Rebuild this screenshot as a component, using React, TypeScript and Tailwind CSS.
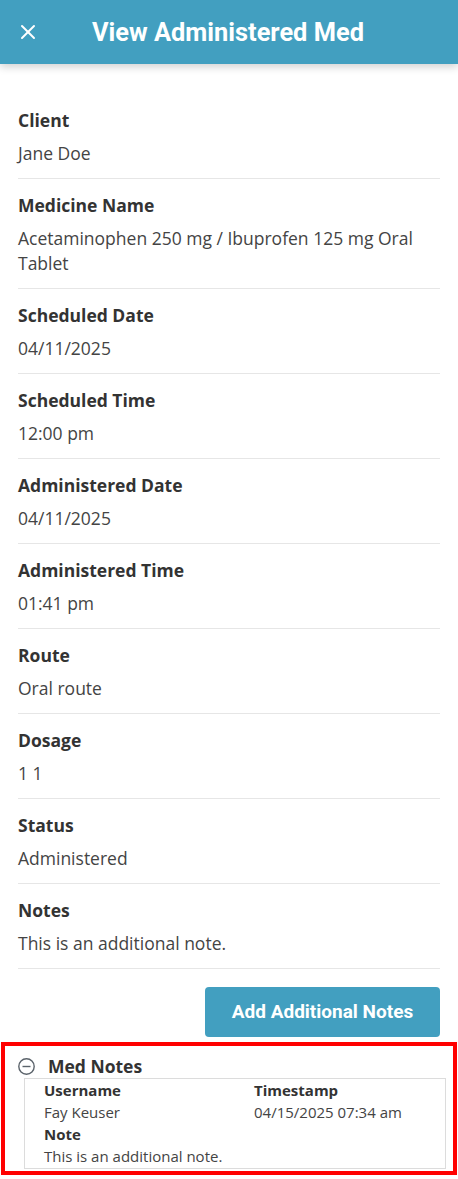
import { X } from 'lucide-react'

const fields = [
  { label: 'Client', value: 'Jane Doe' },
  { label: 'Medicine Name', value: 'Acetaminophen 250 mg / Ibuprofen 125 mg Oral Tablet' },
  { label: 'Scheduled Date', value: '04/11/2025' },
  { label: 'Scheduled Time', value: '12:00 pm' },
  { label: 'Administered Date', value: '04/11/2025' },
  { label: 'Administered Time', value: '01:41 pm' },
  { label: 'Route', value: 'Oral route' },
  { label: 'Dosage', value: '1 1' },
  { label: 'Status', value: 'Administered' },
  { label: 'Notes', value: 'This is an additional note.' },
]

function Field({ label, value }: { label: string; value: string }) {
  return (
    <div className="pt-[14px] pb-[12px] border-b border-[#e6e6e6]">
      <p className="text-[17.5px] leading-[25px] font-bold text-[#333333]">{label}</p>
      <p className="mt-[8px] text-[17.5px] leading-[25px] text-[#444444]">{value}</p>
    </div>
  )
}

export default function App() {
  return (
    <div className="w-[458px] min-h-[1179px] bg-white font-['Open_Sans',sans-serif]">
      {/* Header */}
      <header className="relative z-10 h-[64px] bg-[#429fc0] flex items-center shadow-[0_3px_8px_rgba(0,0,0,0.18)]">
        <button className="ml-[16px] w-[24px] h-[24px] flex items-center justify-center text-white">
          <X size={24} strokeWidth={2} />
        </button>
        <h1 className="ml-[52px] text-[25.4px] font-bold text-white font-['Roboto',sans-serif]">
          View Administered Med
        </h1>
      </header>

      {/* Details */}
      <div className="px-[18px] pt-[30px]">
        {fields.map((f) => (
          <Field key={f.label} label={f.label} value={f.value} />
        ))}

        <div className="flex justify-end pt-[18px]">
          <button className="w-[235px] h-[50px] rounded-[4px] bg-[#429fc0] text-white text-[19px] font-bold font-['Roboto',sans-serif]">
            Add Additional Notes
          </button>
        </div>
      </div>

      {/* Med notes */}
      <div className="mx-[1px] mt-[5px] border-[4px] border-[#ff0000] pt-[10px] pb-[2px]">
        <div className="flex items-center pl-[13px] h-[20px]">
          <svg width="17" height="17" viewBox="0 0 17 17" fill="none" stroke="#5b636b" strokeWidth="1.4">
            <circle cx="8.5" cy="8.5" r="7.7" />
            <line x1="4.5" y1="8.5" x2="12.5" y2="8.5" />
          </svg>
          <span className="ml-[13px] text-[17.5px] font-bold text-[#333333]">Med Notes</span>
        </div>
        <div className="ml-[19px] mr-[7px] mt-[2px] border border-[#dcdcdc] pl-[19px] pb-[1px]">
          <div className="grid grid-cols-[210px_1fr] text-[15px] leading-[22px]">
            <span className="font-bold text-[#333333]">Username</span>
            <span className="font-bold text-[#333333]">Timestamp</span>
            <span className="text-[#444444]">Fay Keuser</span>
            <span className="text-[#444444]">04/15/2025 07:34 am</span>
          </div>
          <p className="text-[15px] leading-[22px] font-bold text-[#333333]">Note</p>
          <p className="text-[15px] leading-[22px] text-[#444444]">This is an additional note.</p>
        </div>
      </div>
    </div>
  )
}
